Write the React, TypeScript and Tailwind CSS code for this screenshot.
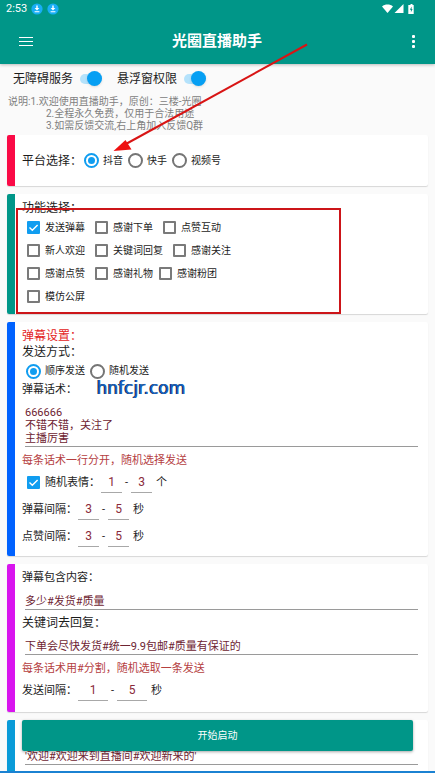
import React, { useState } from 'react'

const featureRows = [
  ['发送弹幕', '感谢下单', '点赞互动'],
  ['新人欢迎', '关键词回复', '感谢关注'],
  ['感谢点赞', '感谢礼物', '感谢粉团'],
  ['模仿公屏'],
]

const Switch = ({ label }: { label: string }) => (
  <label className="flex items-center text-xs">
    {label}
    <input type="checkbox" role="switch" defaultChecked className="peer sr-only" />
    <span className="relative ml-[7px] h-2.5 w-[22px] rounded-full bg-[#b4e2fb]">
      <span className="absolute -top-[3px] right-0 size-[15px] rounded-full bg-[#069ff3] shadow-sm" />
    </span>
  </label>
)

const Radio = ({ name, label, defaultChecked = false }: { name: string; label: string; defaultChecked?: boolean }) => (
  <label className="flex items-center gap-1 text-[10px]">
    <input
      type="radio"
      name={name}
      defaultChecked={defaultChecked}
      className="size-[15px] appearance-none rounded-full border-2 border-[#757575] bg-white bg-clip-content p-[2px] checked:border-[#109df0] checked:bg-[#109df0]"
    />
    {label}
  </label>
)

const CheckBox = ({ defaultChecked = false, id }: { defaultChecked?: boolean; id?: string }) => (
  <span className="relative flex size-[13px] shrink-0">
    <input
      type="checkbox"
      id={id}
      defaultChecked={defaultChecked}
      className="peer size-[13px] appearance-none rounded-[1px] border-2 border-[#7a7a7a] bg-white checked:border-[#109df0] checked:bg-[#109df0]"
    />
    <svg viewBox="0 0 13 13" className="pointer-events-none absolute inset-0 hidden peer-checked:block">
      <path d="M2.5 6.6 5.3 9.3 10.6 3.9" fill="none" stroke="#fff" strokeWidth="1.4" />
    </svg>
  </span>
)

const Card = ({ bar, className = '', children }: { bar: string; className?: string; children: React.ReactNode }) => (
  <section className="relative flex overflow-hidden rounded-[2px] bg-white shadow-[0_1px_1px_rgba(0,0,0,0.14)]">
    <div className={`w-2 shrink-0 ${bar}`} />
    <div className={`min-w-0 grow pl-[7px] pr-2.5 ${className}`}>{children}</div>
  </section>
)

const LineInput = ({ id, value, label }: { id: string; value: string; label?: string }) => (
  <div className="flex pl-[3px]">
    <input
      id={id}
      aria-label={label}
      defaultValue={value}
      className="h-6 w-full border-b border-[#9a9a9a] bg-transparent pt-[5px] text-[11px] text-[#6e2432] outline-none"
    />
  </div>
)

const Range = ({ label, from, to, unit, wide = false }: { label: string; from: string; to: string; unit: string; wide?: boolean }) => {
  const field = `h-[21px] border-b border-[#a8a8a8] bg-transparent text-center text-xs text-[#8a2a3a] outline-none ${wide ? 'w-[30px]' : 'w-[21px]'}`
  return (
    <>
      <input aria-label={`${label}最小`} defaultValue={from} className={`ml-px ${field}`} />
      <span className="w-[9px] text-center">-</span>
      <input aria-label={`${label}最大`} defaultValue={to} className={field} />
      <span className="ml-1">{unit}</span>
    </>
  )
}

const DownloadBadge = () => (
  <svg viewBox="0 0 12 12" className="size-3">
    <circle cx="6" cy="6" r="5.6" fill="#18aef5" />
    <path d="M6 2.4v3" fill="none" stroke="#fff" strokeWidth="1.4" />
    <path d="M3.600 4.900h4.800L6 7.500zM3.600 8.300h4.800v1H3.600z" fill="#fff" />
  </svg>
)

const Header = () => (
  <header className="relative z-10 shrink-0 bg-[#009688] text-white shadow-[0_1px_3px_rgba(0,0,0,0.25)]">
    <div className="flex h-[18px] items-center pl-1.5 pr-5">
      <span className="mr-1 text-[11px]">2:53</span>
      <div className="flex gap-1">
        <DownloadBadge />
        <DownloadBadge />
      </div>
      <svg viewBox="0 0 33 10" className="ml-auto h-2.5 w-[33px]" fill="#fff">
        <path d="M0 2.4C3-.1 8-.1 11 2.4L5.5 9z" />
        <path d="M21.500 0v9h-9z" />
        <path d="M28.500 0h2v1h1.200v9h-5.400V1h2.200z" />
        <path d="M29.600 2.600v2.400h1l-1.700 3.200V5.800h-1z" fill="#009688" />
      </svg>
    </div>
    <div className="flex h-[46px] items-center pl-[19px] pr-5">
      <button aria-label="菜单" className="flex w-3.5 flex-col gap-[3px]">
        <span className="h-px w-full bg-white" />
        <span className="h-px w-full bg-white" />
        <span className="h-px w-full bg-white" />
      </button>
      <h1 className="grow text-center text-[15px] font-bold">光圈直播助手</h1>
      <button aria-label="更多" className="flex w-3.5 flex-col items-end gap-0.5">
        <span className="size-[3px] rounded-[1px] bg-white" />
        <span className="size-[3px] rounded-[1px] bg-white" />
        <span className="size-[3px] rounded-[1px] bg-white" />
      </button>
    </div>
  </header>
)

const App = () => {
  const [running, setRunning] = useState(false)

  return (
    <div className="relative flex h-screen flex-col overflow-hidden border-b-2 border-[#1b82d2] bg-[#fafafa] font-[Roboto,'Noto_Sans_CJK_SC',sans-serif] text-[11px] leading-4 text-[#1c1c1c]">
      <Header />

      <main className="min-h-0 grow overflow-y-auto [scrollbar-width:none]">
        <div className="flex h-[30px] items-center gap-[15px] pl-[13px]">
          <Switch label="无障碍服务" />
          <Switch label="悬浮窗权限" />
        </div>
        <div className="pl-2 pt-0.5 text-[10px] leading-3 text-[#808080]">
          <p>说明:1.欢迎使用直播助手，原创：三楼-光圈</p>
          <p className="pl-[38px]">2.全程永久免费，仅用于合法用途</p>
          <p className="pl-[38px]">3.如需反馈交流,右上角加入反馈Q群</p>
        </div>

        <div className="flex flex-col gap-2 px-[7px] pt-[3px]">
          <Card bar="bg-[#fa0a46]">
            <div className="flex h-[51px] items-center">
              <span className="mr-0.5 text-xs">平台选择：</span>
              <div className="flex gap-[5px]">
                <Radio name="platform" label="抖音" defaultChecked />
                <Radio name="platform" label="快手" />
                <Radio name="platform" label="视频号" />
              </div>
            </div>
          </Card>

          <Card bar="bg-[#009688]" className="py-1.5">
            <h2 className="text-xs leading-4">功能选择：</h2>
            {featureRows.map((row, r) => (
              <div key={r} className="flex h-[23px] items-center gap-2.5 pl-[5px]">
                {row.map((name, i) => (
                  <label
                    key={name}
                    className={`flex items-center gap-[5px] text-[10px] ${name === '感谢粉团' ? '-ml-1' : ''}`}
                  >
                    <CheckBox defaultChecked={r === 0 && i === 0} />
                    {name}
                  </label>
                ))}
              </div>
            ))}
            {/* red frame around the options */}
            <div className="pointer-events-none absolute left-[9px] top-3.5 h-[106px] w-[325px] border-2 border-[#cc1519]" />
          </Card>

          <Card bar="bg-[#0062ff]" className="py-1.5">
            <h2 className="text-xs leading-4 text-[#e32222]">弹幕设置：</h2>
            <p className="text-xs leading-4">发送方式：</p>
            <div className="flex h-[22px] items-center gap-[5px] pl-1">
              <Radio name="order" label="顺序发送" defaultChecked />
              <Radio name="order" label="随机发送" />
            </div>
            <div className="relative">
              <label htmlFor="script">弹幕话术：</label>
              <span className="absolute -top-1 left-[75px] font-['DejaVu_Sans',sans-serif] text-[17px] leading-5 text-[#1763bd] [text-shadow:-1px_0_0_#0a1c46]">
                hnfcjr.com
              </span>
            </div>
            <div className="flex pl-[3px] pt-2">
              <textarea
                id="script"
                rows={3}
                defaultValue={'666666\n不错不错，关注了\n主播厉害'}
                className="h-[41px] w-full resize-none overflow-hidden border-b border-[#9a9a9a] bg-transparent leading-[13px] text-[#6e2432] outline-none"
              />
            </div>
            <p className="mt-1.5 text-[#b5403f]">每条话术一行分开，随机选择发送</p>
            <div className="flex h-[27px] items-center pl-[5px]">
              <CheckBox id="emoji" defaultChecked />
              <label htmlFor="emoji" className="ml-[5px]">随机表情：</label>
              <Range label="随机表情" from="1" to="3" unit="个" />
            </div>
            <div className="flex h-[27px] items-center">
              弹幕间隔：
              <Range label="弹幕间隔" from="3" to="5" unit="秒" />
            </div>
            <div className="flex h-[27px] items-center">
              点赞间隔：
              <Range label="点赞间隔" from="3" to="5" unit="秒" />
            </div>
          </Card>

          <Card bar="bg-[#d814ee]" className="pb-2 pt-1.5">
            <label htmlFor="contains" className="block">弹幕包含内容：</label>
            <LineInput id="contains" value="多少#发货#质量" />
            <label htmlFor="reply" className="mt-[5px] block text-xs leading-4">关键词去回复：</label>
            <LineInput id="reply" value="下单会尽快发货#统一9.9包邮#质量有保证的" />
            <p className="mt-1.5 text-[#b5403f]">每条话术用#分割，随机选取一条发送</p>
            <div className="flex h-[27px] items-center">
              发送间隔：
              <Range label="发送间隔" from="1" to="5" unit="秒" wide />
            </div>
          </Card>

          <Card bar="bg-[#0a9bd8]" className="pb-5 pt-[21px]">
            <LineInput id="welcome" label="欢迎话术" value="'欢迎#欢迎来到直播间#欢迎新来的'" />
          </Card>
        </div>
      </main>

      <button
        onClick={() => setRunning(!running)}
        className="absolute bottom-5 left-[22px] right-[22px] h-[31px] rounded-[2px] bg-[#009688] text-[10px] text-white shadow-[0_1px_3px_rgba(0,0,0,0.35)]"
      >
        {running ? '停止' : '开始启动'}
      </button>

      {/* arrow pointing at the platform choice */}
      <svg className="pointer-events-none absolute left-0 top-0 z-20 h-40 w-80" viewBox="0 0 320 160">
        <path d="M307 44.500 125 144.500" stroke="#d81414" strokeWidth="2" />
        <path d="M113.500 151 125.500 140 131.500 149.500z" fill="#ee1111" />
      </svg>
    </div>
  )
}

export default App
